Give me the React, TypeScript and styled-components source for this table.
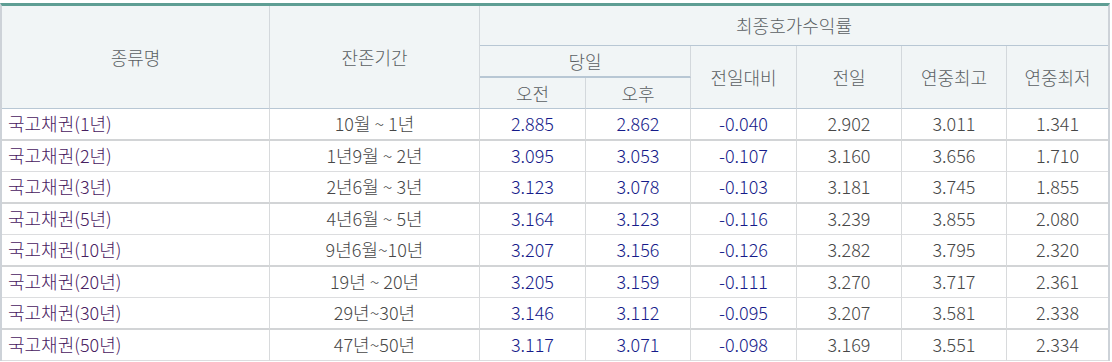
import styled, { createGlobalStyle } from 'styled-components';

const GlobalStyle = createGlobalStyle`
  html, body {
    margin: 0;
    padding: 0;
    background: #ffffff;
  }
  body {
    font-family: "Noto Sans CJK KR", "Noto Sans", sans-serif;
  }
`;

const Page = styled.div`
  padding-top: 3px;
  width: 1110px;
`;

const Table = styled.table`
  width: 1110px;
  table-layout: fixed;
  border-collapse: separate;
  border-spacing: 0;
  border-top: 3px solid #5e9e94;
  border-left: 2px solid #cdd2d8;
  border-right: 2px solid #cdd2d8;
  box-sizing: border-box;
  font-size: 18px;
  font-weight: 300;
  color: #555555;
`;

const HeadCell = styled.th<{ $h: number; $thick?: boolean; $last?: boolean }>`
  box-sizing: border-box;
  height: ${({ $h }) => $h}px;
  padding: 0 0 1px;
  font-weight: 300;
  text-align: center;
  vertical-align: middle;
  background: #f1f5f6;
  color: #5a5f63;
  border-bottom: ${({ $thick }) => ($thick ? 2 : 1)}px solid #b8c7d4;
  border-right: ${({ $last }) => ($last ? 0 : 1)}px solid #d3d8dc;
  line-height: 1;
`;

const Row = styled.tr<{ $thick: boolean }>`
  td {
    box-sizing: border-box;
    height: ${({ $thick }) => ($thick ? 32 : 31)}px;
    border-bottom: ${({ $thick }) => ($thick ? '2px solid #d2d4d6' : '1px solid #dcdddf')};
  }
`;

type Tone = 'name' | 'period' | 'rate' | 'plain';

const toneColor: Record<Tone, string> = {
  name: '#48205f',
  period: '#474747',
  rate: '#161b8a',
  plain: '#474747',
};

const Cell = styled.td<{ $tone: Tone; $last?: boolean }>`
  padding: 0 0 2px;
  padding-left: ${({ $tone }) => ($tone === 'name' ? '6px' : '0')};
  text-align: ${({ $tone }) => ($tone === 'name' ? 'left' : 'center')};
  vertical-align: middle;
  color: ${({ $tone }) => toneColor[$tone]};
  border-right: ${({ $last }) => ($last ? 0 : 1)}px solid #d8dadc;
  line-height: 1;
  white-space: nowrap;
`;

const widths = [268, 210, 106, 105, 106, 105, 105, 101];

const rows = [
  ['국고채권(1년)', '10월 ~ 1년', '2.885', '2.862', '-0.040', '2.902', '3.011', '1.341'],
  ['국고채권(2년)', '1년9월 ~ 2년', '3.095', '3.053', '-0.107', '3.160', '3.656', '1.710'],
  ['국고채권(3년)', '2년6월 ~ 3년', '3.123', '3.078', '-0.103', '3.181', '3.745', '1.855'],
  ['국고채권(5년)', '4년6월 ~ 5년', '3.164', '3.123', '-0.116', '3.239', '3.855', '2.080'],
  ['국고채권(10년)', '9년6월~10년', '3.207', '3.156', '-0.126', '3.282', '3.795', '2.320'],
  ['국고채권(20년)', '19년 ~ 20년', '3.205', '3.159', '-0.111', '3.270', '3.717', '2.361'],
  ['국고채권(30년)', '29년~30년', '3.146', '3.112', '-0.095', '3.207', '3.581', '2.338'],
  ['국고채권(50년)', '47년~50년', '3.117', '3.071', '-0.098', '3.169', '3.551', '2.334'],
];

const toneFor = (i: number): Tone => {
  if (i === 0) return 'name';
  if (i === 1) return 'period';
  if (i >= 2 && i <= 4) return 'rate';
  return 'plain';
};

export default function App() {
  return (
    <Page>
      <GlobalStyle />
      <Table>
        <colgroup>
          {widths.map((w, i) => (
            <col key={i} style={{ width: w }} />
          ))}
        </colgroup>
        <thead>
          <tr>
            <HeadCell $h={40} rowSpan={3}>종류명</HeadCell>
            <HeadCell $h={40} rowSpan={3}>잔존기간</HeadCell>
            <HeadCell $h={40} colSpan={6} $last>최종호가수익률</HeadCell>
          </tr>
          <tr>
            <HeadCell $h={32} colSpan={2} $thick>당일</HeadCell>
            <HeadCell $h={32} rowSpan={2}>전일대비</HeadCell>
            <HeadCell $h={32} rowSpan={2}>전일</HeadCell>
            <HeadCell $h={32} rowSpan={2}>연중최고</HeadCell>
            <HeadCell $h={32} rowSpan={2} $last>연중최저</HeadCell>
          </tr>
          <tr>
            <HeadCell $h={31}>오전</HeadCell>
            <HeadCell $h={31}>오후</HeadCell>
          </tr>
        </thead>
        <tbody>
          {rows.map((r, ri) => (
            <Row key={ri} $thick={ri % 2 === 0}>
              {r.map((v, ci) => (
                <Cell key={ci} $tone={toneFor(ci)} $last={ci === r.length - 1}>
                  {v}
                </Cell>
              ))}
            </Row>
          ))}
        </tbody>
      </Table>
    </Page>
  );
}
